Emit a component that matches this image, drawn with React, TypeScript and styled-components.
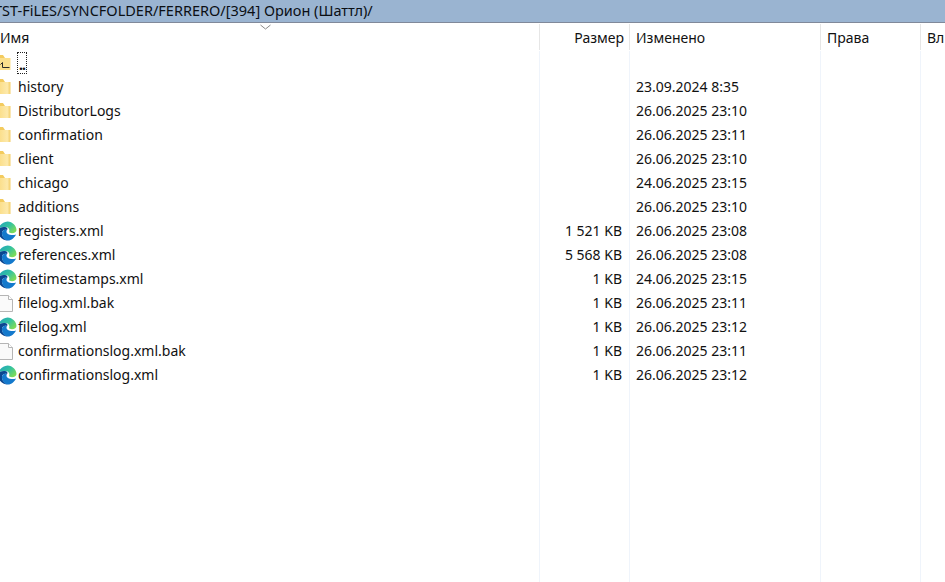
import React from 'react'
import styled, { createGlobalStyle } from 'styled-components'

const GlobalStyle = createGlobalStyle`
  html, body, #root {
    margin: 0;
    height: 100%;
    overflow: hidden;
    background: #fff;
  }
  body {
    font-family: "Noto Sans", "Open Sans", "Liberation Sans", sans-serif;
    font-size: 14px;
    color: #111;
  }
`

const Window = styled.div`
  display: flex;
  flex-direction: column;
  width: 945px;
  height: 582px;
  overflow: hidden;
`

const PathBar = styled.div`
  flex: none;
  height: 22px;
  line-height: 21px;
  background: #9ab4d1;
  border-bottom: 1px solid #80899a;
  white-space: nowrap;
  font-size: 14.5px;
  color: #0b0f14;
  text-indent: -6px;
  overflow: hidden;
`

const Columns = 'grid-template-columns: 539px 90px 191px 100px 25px;'

const Header = styled.div`
  position: relative;
  flex: none;
  display: grid;
  ${Columns}
  height: 27px;
  padding-top: 1px;
`

const HeaderCell = styled.div<{ $right?: boolean; $first?: boolean }>`
  height: 26px;
  line-height: 27px;
  white-space: nowrap;
  overflow: hidden;
  border-left: ${(p) => (p.$first ? 'none' : '1px solid #e6e6e6')};
  padding: ${(p) => (p.$right ? '0 5px 0 0' : p.$first ? '0' : '0 0 0 6px')};
  text-align: ${(p) => (p.$right ? 'right' : 'left')};
`

const SortChevron = styled.svg`
  position: absolute;
  left: 260px;
  top: 1px;
`

const Body = styled.div`
  flex: 1;
  display: flex;
  flex-direction: column;
`

const Row = styled.div`
  flex: none;
  display: grid;
  ${Columns}
  height: 24px;
  line-height: 24px;
`

const Filler = styled(Row)`
  flex: 1;
`

const NameCell = styled.div`
  display: flex;
  align-items: center;
  gap: 2px;
  overflow: hidden;
`

const IconSlot = styled.span`
  flex: none;
  display: flex;
  width: 16px;
  height: 24px;
  align-items: center;
`

const Icon = styled.svg`
  flex: none;
  overflow: visible;
`

const Cell = styled.div<{ $right?: boolean }>`
  border-left: 1px solid #eff4fb;
  padding: ${(p) => (p.$right ? '0 7px 0 0' : '0 0 0 6px')};
  text-align: ${(p) => (p.$right ? 'right' : 'left')};
  white-space: nowrap;
  overflow: hidden;
`

const UpLabel = styled.span`
  display: block;
  width: 10px;
  height: 22px;
  line-height: 24px;
  margin-left: -1px;
  border: 1px dotted #222;
  box-sizing: border-box;
  text-align: center;
  font-size: 14px;
  font-weight: 700;
  letter-spacing: -1px;
`

const FolderGradient = () => (
  <defs>
    <linearGradient id="folderFill" x1="0" y1="0" x2="1" y2="0">
      <stop offset="0" stopColor="#fbdf8c" />
      <stop offset="0.7" stopColor="#fde9ab" />
      <stop offset="1" stopColor="#f3cd66" />
    </linearGradient>
  </defs>
)

const FolderIcon = () => (
  <Icon width="16" height="16" viewBox="0 0 16 16">
    <FolderGradient />
    <path d="M0 0h3l2 3h5v12H0z" fill="#f3cb5e" />
    <path d="M0 3h10.500v12H0z" fill="url(#folderFill)" />
  </Icon>
)

const UpFolderIcon = () => (
  <Icon width="16" height="16" viewBox="0 0 16 16">
    <path d="M0 0h3l2 3h5v12H0z" fill="#f3cb5e" />
    <path d="M0 3h10.500v12H0z" fill="#fbdf8c" />
    <path d="M2.500 12.500H9.500M2.500 7.500v5M.5 9.500l2-2" stroke="#2b2b2b" strokeWidth="1" fill="none" />
  </Icon>
)

const EdgeIcon = () => (
  <Icon width="16" height="20" viewBox="0 0 16 20">
    <defs>
      <linearGradient id="edgeTop" x1="0" y1="0" x2="1" y2="0.7">
        <stop offset="0" stopColor="#1f9fc0" />
        <stop offset="0.55" stopColor="#33c2a0" />
        <stop offset="1" stopColor="#7fdc58" />
      </linearGradient>
    </defs>
    <path
      d="M-2 9C-1 4 3 1 7.500 .5 12.500 .5 16.500 5 16.500 9c0 2-2 3.200-4.500 3.200-1.500 0-3-.5-3-1.200 1-2 0-5-4-5-3 0-6 1-7 3z"
      fill="url(#edgeTop)"
    />
    <path
      d="M-2 9c1-2 4-3.500 7-3 2.500.5 3 2 2 3-3-1-5.500 1-5 4 .5 3 3 5.500 6 6.500C2 19.500-2.500 15-2 9z"
      fill="#0b4690"
    />
    <path
      d="M2 13c-.5-3 2-5 5-4-1 1.500-.5 3 1 4 2 1.300 5.500 1.300 8 .5-1.500 3.300-4.500 6-8 6-3-.5-5.500-3-6-6.500z"
      fill="#1479cc"
    />
  </Icon>
)

const FileIcon = () => (
  <Icon width="14" height="17" viewBox="0 0 14 17">
    <path d="M-1 .5h9.500l4 4v12H-1z" fill="#fafafa" stroke="#b5b5b5" />
    <path d="M8.500.5v4h4" fill="#fff" stroke="#b5b5b5" />
  </Icon>
)

type Kind = 'folder' | 'edge' | 'file'

const items: { name: string; kind: Kind; size?: string; date: string }[] = [
  { name: 'history', kind: 'folder', date: '23.09.2024 8:35' },
  { name: 'DistributorLogs', kind: 'folder', date: '26.06.2025 23:10' },
  { name: 'confirmation', kind: 'folder', date: '26.06.2025 23:11' },
  { name: 'client', kind: 'folder', date: '26.06.2025 23:10' },
  { name: 'chicago', kind: 'folder', date: '24.06.2025 23:15' },
  { name: 'additions', kind: 'folder', date: '26.06.2025 23:10' },
  { name: 'registers.xml', kind: 'edge', size: '1 521 KB', date: '26.06.2025 23:08' },
  { name: 'references.xml', kind: 'edge', size: '5 568 KB', date: '26.06.2025 23:08' },
  { name: 'filetimestamps.xml', kind: 'edge', size: '1 KB', date: '24.06.2025 23:15' },
  { name: 'filelog.xml.bak', kind: 'file', size: '1 KB', date: '26.06.2025 23:11' },
  { name: 'filelog.xml', kind: 'edge', size: '1 KB', date: '26.06.2025 23:12' },
  { name: 'confirmationslog.xml.bak', kind: 'file', size: '1 KB', date: '26.06.2025 23:11' },
  { name: 'confirmationslog.xml', kind: 'edge', size: '1 KB', date: '26.06.2025 23:12' },
]

const icons: Record<Kind, React.ReactNode> = {
  folder: <FolderIcon />,
  edge: <EdgeIcon />,
  file: <FileIcon />,
}

const App: React.FC = () => (
  <Window>
    <GlobalStyle />
    <PathBar>TST-FiLES/SYNCFOLDER/FERRERO/[394] Орион (Шаттл)/</PathBar>
    <Header>
      <HeaderCell $first>Имя</HeaderCell>
      <HeaderCell $right>Размер</HeaderCell>
      <HeaderCell>Изменено</HeaderCell>
      <HeaderCell>Права</HeaderCell>
      <HeaderCell>Вл</HeaderCell>
      <SortChevron width="11" height="7" viewBox="0 0 11 7">
        <path d="M.5 1l5 4 5-4" fill="none" stroke="#8a8a8a" />
      </SortChevron>
    </Header>
    <Body>
      <Row>
        <NameCell>
          <IconSlot>
            <UpFolderIcon />
          </IconSlot>
          <UpLabel>..</UpLabel>
        </NameCell>
        <Cell $right />
        <Cell />
        <Cell />
        <Cell />
      </Row>
      {items.map((item) => (
        <Row key={item.name}>
          <NameCell>
            <IconSlot>{icons[item.kind]}</IconSlot>
            {item.name}
          </NameCell>
          <Cell $right>{item.size}</Cell>
          <Cell>{item.date}</Cell>
          <Cell />
          <Cell />
        </Row>
      ))}
      <Filler>
        <div />
        <Cell />
        <Cell />
        <Cell />
        <Cell />
      </Filler>
    </Body>
  </Window>
)

export default App
